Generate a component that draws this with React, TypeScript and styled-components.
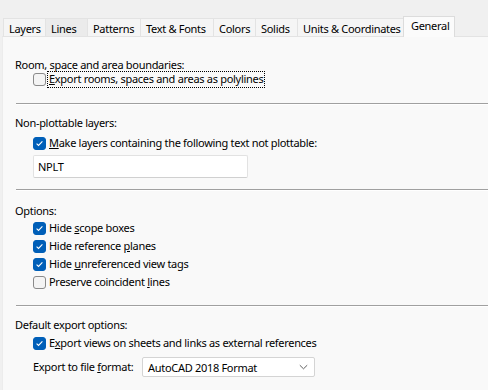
import React from "react";
import styled, { createGlobalStyle, css } from "styled-components";

const GlobalStyle = createGlobalStyle`
  html, body {
    margin: 0;
    padding: 0;
    background: #f0f0f0;
  }
  body {
    font-family: "Noto Sans", "Open Sans", sans-serif;
    font-size: 11px;
    letter-spacing: -0.3px;
    color: #000;
  }
`;

const Window = styled.div`
  width: 488px;
  height: 390px;
  display: flex;
  flex-direction: column;
  overflow: hidden;
`;

const TabStrip = styled.div`
  display: flex;
  align-items: flex-end;
  height: 36px;
  padding-left: 3px;
  position: relative;
  z-index: 1;
`;

const Tab = styled.div<{ $active?: boolean; $hover?: boolean; $w: number }>`
  width: ${({ $w }) => $w}px;
  height: 18px;
  line-height: 19px;
  padding-left: 5px;
  background: ${({ $hover }) => ($hover ? "#ebebeb" : "#f5f5f5")};
  border: 1px solid #e3e3e3;
  border-bottom: none;
  margin-right: -1px;
  white-space: nowrap;
  box-sizing: border-box;
  ${({ $active }) =>
    $active &&
    css`
      height: 21px;
      line-height: 17px;
      margin-bottom: -1px;
      padding-left: 7px;
      background: #fbfbfb;
      border-color: #dcdcdc;
    `}
`;

const Panel = styled.div`
  flex: 1;
  margin-left: 2px;
  background: #f9f9f9;
  border-top: 1px solid #e3e3e3;
  border-left: 1px solid #ececec;
  padding-left: 12px;
  display: flex;
  flex-direction: column;
`;

const Section = styled.div<{ $top: number }>`
  display: flex;
  flex-direction: column;
  margin-top: ${({ $top }) => $top}px;
`;

const Heading = styled.div`
  line-height: 14px;
  height: 14px;
`;

const Indent = styled.div<{ $top?: number; $gap?: number }>`
  display: flex;
  flex-direction: column;
  gap: ${({ $gap }) => $gap ?? 0}px;
  padding-left: 18px;
  margin-top: ${({ $top }) => $top ?? 0}px;
`;

const Row = styled.label`
  display: flex;
  align-items: center;
  height: 14px;
  line-height: 14px;
  gap: 3px;
  white-space: nowrap;
`;

const Box = styled.span<{ $checked?: boolean }>`
  width: 13px;
  height: 13px;
  box-sizing: border-box;
  border-radius: 3px;
  flex: none;
  display: flex;
  align-items: center;
  justify-content: center;
  ${({ $checked }) =>
    $checked
      ? css`
          background: #005fb8;
          border: 1px solid #005fb8;
        `
      : css`
          background: #f4f4f4;
          border: 1px solid #8a8a8a;
        `}
`;

const Focus = styled.span`
  outline: 1px dotted #000;
  padding: 0 1px 1px 1px;
  margin-left: -1px;
`;

const Key = styled.span`
  text-decoration: underline;
  text-underline-offset: 1px;
`;

const Separator = styled.div<{ $top: number }>`
  margin-top: ${({ $top }) => $top}px;
  border-top: 1px solid #a0a0a0;
  border-bottom: 1px solid #ffffff;
  margin-left: 1px;
`;

const TextInput = styled.div`
  width: 215px;
  height: 23px;
  box-sizing: border-box;
  background: #ffffff;
  border: 1px solid #e2e2e2;
  border-bottom-color: #d0d0d0;
  border-radius: 2px;
  padding-left: 4px;
  line-height: 21px;
  margin-top: 5px;
`;

const FormatRow = styled.div`
  display: flex;
  align-items: center;
  margin-top: 7px;
`;

const FormatLabel = styled.span`
  flex: none;
  width: 109px;
  line-height: 14px;
  white-space: nowrap;
`;

const Select = styled.div`
  width: 173px;
  height: 20px;
  box-sizing: border-box;
  border: 1px solid #d4d4d4;
  border-radius: 2px;
  background: #ffffff;
  display: flex;
  align-items: center;
  justify-content: space-between;
  padding: 0 6px 0 5px;
`;

const Check = () => (
  <svg width="9" height="9" viewBox="0 0 9 9">
    <path d="M1.6 4.7 L3.5 6.5 L7.4 2.4" fill="none" stroke="#fff" strokeWidth="1.1" />
  </svg>
);

const Chevron = () => (
  <svg width="9" height="6" viewBox="0 0 9 6">
    <path d="M0.8 1.2 L4.5 4.8 L8.2 1.2" fill="none" stroke="#606060" strokeWidth="1" />
  </svg>
);

const CheckBox: React.FC<{ checked?: boolean }> = ({ checked }) => (
  <Box $checked={checked}>{checked && <Check />}</Box>
);

const tabs: [string, number][] = [
  ["Layers", 43],
  ["Lines", 43],
  ["Patterns", 54],
  ["Text & Fonts", 74],
  ["Colors", 43],
  ["Solids", 43],
  ["Units & Coordinates", 107],
  ["General", 52],
];

export default function App() {
  return (
    <Window>
      <GlobalStyle />
      <TabStrip>
        {tabs.map(([t, w]) => (
          <Tab key={t} $w={w} $active={t === "General"} $hover={t === "Lines"}>
            {t}
          </Tab>
        ))}
      </TabStrip>
      <Panel>
        <Section $top={21}>
          <Heading>Room, space and area boundaries:</Heading>
          <Indent>
            <Row>
              <CheckBox />
              <Focus>
                <Key>E</Key>xport rooms, spaces and areas as polylines
              </Focus>
            </Row>
          </Indent>
        </Section>
        <Separator $top={17} />

        <Section $top={11}>
          <Heading>Non-plottable layers:</Heading>
          <Indent $top={6}>
            <Row>
              <CheckBox checked />
              <span>
                <Key>M</Key>ake layers containing the following text not plottable:
              </span>
            </Row>
            <TextInput>NPLT</TextInput>
          </Indent>
        </Section>
        <Separator $top={11} />

        <Section $top={13}>
          <Heading>Options:</Heading>
          <Indent $top={3} $gap={4}>
            <Row>
              <CheckBox checked />
              <span>
                Hide <Key>s</Key>cope boxes
              </span>
            </Row>
            <Row>
              <CheckBox checked />
              <span>
                Hide reference <Key>p</Key>lanes
              </span>
            </Row>
            <Row>
              <CheckBox checked />
              <span>
                Hide <Key>u</Key>nreferenced view tags
              </span>
            </Row>
            <Row>
              <CheckBox />
              <span>
                Preserve coincident <Key>l</Key>ines
              </span>
            </Row>
          </Indent>
        </Section>
        <Separator $top={16} />

        <Section $top={11}>
          <Heading>Default export options:</Heading>
          <Indent $top={4}>
            <Row>
              <CheckBox checked />
              <span>
                E<Key>x</Key>port views on sheets and links as external references
              </span>
            </Row>
            <FormatRow>
              <FormatLabel>
                Export to file <Key>f</Key>ormat:
              </FormatLabel>
              <Select>
                <span>AutoCAD 2018 Format</span>
                <Chevron />
              </Select>
            </FormatRow>
          </Indent>
        </Section>
      </Panel>
    </Window>
  );
}
